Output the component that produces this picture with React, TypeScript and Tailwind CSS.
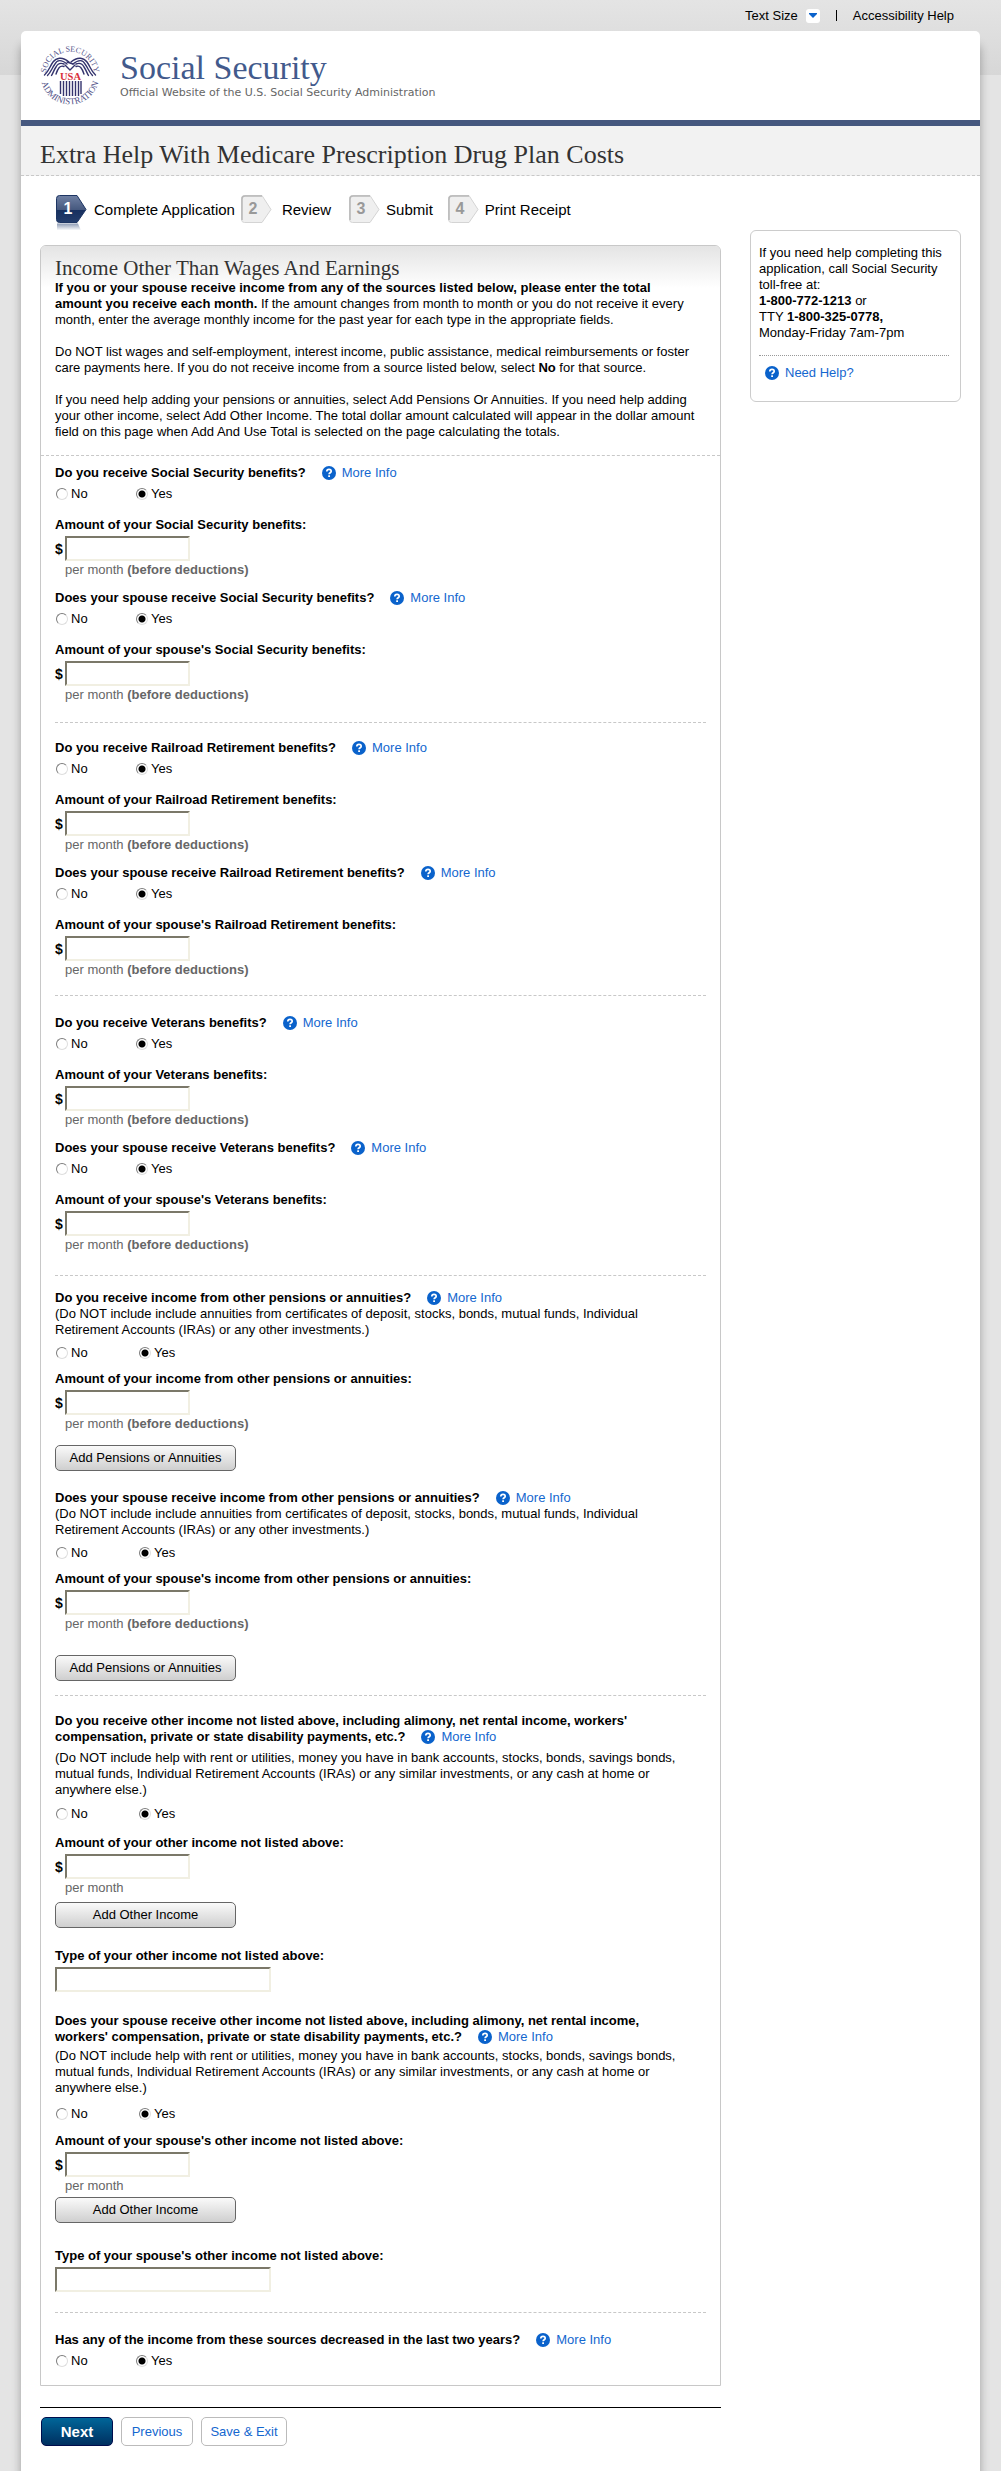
import { useId, type ReactNode } from "react";
import clsx from "clsx";

const STEPS = [
  { label: "Complete Application", spacing: "gap-[7px]" },
  { label: "Review", spacing: "ml-[6px] gap-[10px]" },
  { label: "Submit", spacing: "ml-[18px] gap-[6px]" },
  { label: "Print Receipt", spacing: "ml-[15px] gap-[6px]" },
];

function Seal() {
  return (
    <svg className="h-[60px] w-[60px] shrink-0 overflow-visible" viewBox="0 0 60 60" role="img" aria-label="Seal">
      <defs>
        <path id="seal-top" d="M5.6 31 A24.4 24.4 0 0 1 54.4 31" />
        <path id="seal-bottom" d="M0.6 30 A29.4 29.4 0 0 0 59.4 30" />
      </defs>
      <g fill="#54548a" fontFamily="Liberation Serif, serif" textAnchor="middle">
        <text fontSize="8">
          <textPath href="#seal-top" startOffset="50%">SOCIAL SECURITY</textPath>
        </text>
        <text fontSize="9">
          <textPath href="#seal-bottom" startOffset="50%">ADMINISTRATION</textPath>
        </text>
      </g>
      <g fill="none" stroke="#34346e" strokeWidth="1.4" strokeLinecap="round">
        <path d="M29 17 C22 11 16 13 13 17 C10 21 9 26 4.5 30" />
        <path d="M27 19 C21 14 17 15 15 19 C12 23 11 27 7.5 30.5" />
        <path d="M24 19 C19 17 17 20 16 22 C14 25 13 28 11.5 30.5" />
        <path d="M24 21.5 C20 20 18 23 16 29" />
        <path d="M31 17 C38 11 44 13 47 17 C50 21 51 26 55.5 30" />
        <path d="M33 19 C39 14 43 15 45 19 C48 23 49 27 52.5 30.5" />
        <path d="M36 19 C41 17 43 20 44 22 C46 25 47 28 48.5 30.5" />
        <path d="M36 21.5 C40 20 42 23 44 29" />
        <path d="M25 20 L30 25 L35 20 M27 17 L33 19" />
      </g>
      <text
        x="30.5"
        y="34.5"
        fill="#d8303a"
        fontFamily="Liberation Serif, serif"
        fontWeight="bold"
        fontSize="10.5"
        textAnchor="middle"
      >
        USA
      </text>
      <path
        d="M20.5 36v13M23.5 36v15M26.5 36v15M29.5 36v15M32.5 36v15M35.5 36v15M38.5 36v15M41 36v13"
        stroke="#34346e"
        strokeWidth="1.4"
      />
    </svg>
  );
}

function StepIcon({ number, active }: { number: number; active: boolean }) {
  return (
    <svg className="h-[36px] w-[31px] shrink-0" viewBox="0 0 31 36" aria-hidden="true">
      <defs>
        <linearGradient id="step-active" x1="0" y1="0" x2="0" y2="1">
          <stop offset="0" stopColor="#6f80a3" />
          <stop offset="0.52" stopColor="#46597f" />
          <stop offset="0.54" stopColor="#17305f" />
          <stop offset="1" stopColor="#243d6c" />
        </linearGradient>
        <linearGradient id="step-shadow" x1="0" y1="0" x2="0" y2="1">
          <stop offset="0" stopColor="#8d9bb5" />
          <stop offset="1" stopColor="#ffffff" />
        </linearGradient>
      </defs>
      {active && <path d="M1 28.5h21l3 7H1z" fill="url(#step-shadow)" />}
      <path
        d="M3.5 0.5H21L30 14.5L21 27.5H3.5Q0.5 27.5 0.5 24.5V3.5Q0.5 0.5 3.5 0.5Z"
        fill={active ? "url(#step-active)" : "#efefef"}
        stroke={active ? "#1d3563" : "#d4d4d4"}
      />
      {!active && <path d="M1 25V4Q1 1 4 1H21" fill="none" stroke="#b8b8b8" strokeWidth="1.5" />}
      <text
        x="12"
        y="18.5"
        fill={active ? "#ffffff" : "#999999"}
        fontFamily="Liberation Sans, Arial, sans-serif"
        fontWeight="bold"
        fontSize="16"
        textAnchor="middle"
      >
        {number}
      </text>
    </svg>
  );
}

function HelpLink({ children, className }: { children: ReactNode; className?: string }) {
  return (
    <a href="#help" className={clsx("inline-flex items-center gap-[6px] font-normal text-[#1467cf]", className)}>
      <svg className="h-[14px] w-[14px]" viewBox="0 0 14 14" aria-hidden="true">
        <circle cx="7" cy="7" r="7" fill="#0a62cb" />
        <path
          d="M4.8 5.4C4.8 2.7 9.2 2.7 9.2 5.2C9.2 6.7 7.1 6.7 7.1 8.3"
          fill="none"
          stroke="#fff"
          strokeWidth="1.7"
        />
        <rect x="6.2" y="9.3" width="1.8" height="1.7" fill="#fff" />
      </svg>
      {children}
    </a>
  );
}

interface YesNoProps {
  question: string;
  note?: string;
  className?: string;
  noteClassName?: string;
  choicesClassName?: string;
}

function YesNo({ question, note, className, noteClassName, choicesClassName = "mt-[5px]" }: YesNoProps) {
  const name = useId();
  const radio =
    "h-[12px] w-[12px] appearance-none rounded-full border border-t-[#7d7d7d] border-r-[#dedede] border-b-[#dedede] border-l-[#7d7d7d] bg-white checked:bg-[radial-gradient(circle,#000_3px,transparent_4px)]";

  return (
    <fieldset className={className}>
      <legend className="pr-4 font-bold">
        {question}
        <HelpLink className="ml-4 h-[16px] align-top">More Info</HelpLink>
      </legend>
      {note && <p className={noteClassName}>{note}</p>}
      <div className={clsx("flex", choicesClassName)}>
        <label className={clsx("flex items-center gap-[3px] pl-[1px]", note ? "w-[84px]" : "w-[81px]")}>
          <input type="radio" name={name} value="no" className={radio} />
          No
        </label>
        <label className="flex items-center gap-[3px]">
          <input type="radio" name={name} value="yes" defaultChecked className={radio} />
          Yes
        </label>
      </div>
    </fieldset>
  );
}

const INPUT =
  "h-[25px] border-2 border-t-[#7b7869] border-r-[#f1efe2] border-b-[#f1efe2] border-l-[#7b7869] bg-white px-1";

interface AmountProps {
  label: string;
  className?: string;
  beforeDeductions?: boolean;
}

function Amount({ label, className = "mt-[15px]", beforeDeductions = true }: AmountProps) {
  const id = useId();
  return (
    <div className={className}>
      <label htmlFor={id} className="block font-bold">
        {label}
      </label>
      <div className="mt-[3px] flex items-center">
        <span className="w-[10px] text-[14px] font-bold">$</span>
        <input id={id} type="text" className={clsx(INPUT, "w-[125px]")} />
      </div>
      <p className="mt-[1px] pl-[10px] text-[#666]">
        per month {beforeDeductions && <strong>(before deductions)</strong>}
      </p>
    </div>
  );
}

function IncomeType({ label, className }: { label: string; className?: string }) {
  const id = useId();
  return (
    <div className={className}>
      <label htmlFor={id} className="block font-bold">
        {label}
      </label>
      <input id={id} type="text" className={clsx(INPUT, "mt-[3px] block w-[216px]")} />
    </div>
  );
}

function AddButton({ children, className }: { children: ReactNode; className?: string }) {
  return (
    <button
      type="button"
      className={clsx(
        "block h-[26px] w-[181px] rounded-[5px] border border-[#666] bg-linear-to-b from-[#fafafa] to-[#cfcfcf] pb-[1px]",
        className
      )}
    >
      {children}
    </button>
  );
}

function Divider({ className }: { className?: string }) {
  return <hr className={clsx("border-t border-dashed border-[#c8c8c8]", className)} />;
}

const PENSION_NOTE =
  "(Do NOT include include annuities from certificates of deposit, stocks, bonds, mutual funds, Individual Retirement Accounts (IRAs) or any other investments.)";
const OTHER_NOTE =
  "(Do NOT include help with rent or utilities, money you have in bank accounts, stocks, bonds, savings bonds, mutual funds, Individual Retirement Accounts (IRAs) or any similar investments, or any cash at home or anywhere else.)";

const BENEFITS = [
  { name: "Social Security", top: "pt-[9px]", bottom: "mt-[19px]" },
  { name: "Railroad Retirement", top: "pt-[17px]", bottom: "mt-[17px]" },
  { name: "Veterans", top: "pt-[19px]", bottom: "mt-[22px]" },
];

function IncomeForm() {
  return (
    <div className="px-[14px] pb-[16px]">
      {BENEFITS.map(({ name, top, bottom }) => (
        <section key={name} className={top}>
          <YesNo question={`Do you receive ${name} benefits?`} />
          <Amount label={`Amount of your ${name} benefits:`} />
          <YesNo question={`Does your spouse receive ${name} benefits?`} className="mt-[12px]" />
          <Amount label={`Amount of your spouse's ${name} benefits:`} />
          <Divider className={bottom} />
        </section>
      ))}

      <section className="pt-[14px]">
        <YesNo
          question="Do you receive income from other pensions or annuities?"
          note={PENSION_NOTE}
          noteClassName="pr-[40px]"
          choicesClassName="mt-[7px]"
        />
        <Amount label="Amount of your income from other pensions or annuities:" className="mt-[10px]" />
        <AddButton className="mt-[13px]">Add Pensions or Annuities</AddButton>
        <YesNo
          question="Does your spouse receive income from other pensions or annuities?"
          note={PENSION_NOTE}
          className="mt-[19px]"
          noteClassName="pr-[40px]"
          choicesClassName="mt-[7px]"
        />
        <Amount label="Amount of your spouse's income from other pensions or annuities:" className="mt-[10px]" />
        <AddButton className="mt-[23px]">Add Pensions or Annuities</AddButton>
        <Divider className="mt-[14px]" />
      </section>

      <section className="pt-[17px]">
        <YesNo
          question="Do you receive other income not listed above, including alimony, net rental income, workers' compensation, private or state disability payments, etc.?"
          note={OTHER_NOTE}
          noteClassName="mt-[5px]"
          choicesClassName="mt-[8px]"
        />
        <Amount
          label="Amount of your other income not listed above:"
          className="mt-[13px]"
          beforeDeductions={false}
        />
        <AddButton className="mt-[6px]">Add Other Income</AddButton>
        <IncomeType label="Type of your other income not listed above:" className="mt-[20px]" />
        <YesNo
          question="Does your spouse receive other income not listed above, including alimony, net rental income, workers' compensation, private or state disability payments, etc.?"
          note={OTHER_NOTE}
          className="mt-[21px]"
          noteClassName="mt-[3px]"
          choicesClassName="mt-[10px]"
        />
        <Amount
          label="Amount of your spouse's other income not listed above:"
          className="mt-[11px]"
          beforeDeductions={false}
        />
        <AddButton className="mt-[3px]">Add Other Income</AddButton>
        <IncomeType label="Type of your spouse's other income not listed above:" className="mt-[25px]" />
        <Divider className="mt-[20px]" />
      </section>

      <section className="pt-[19px]">
        <YesNo question="Has any of the income from these sources decreased in the last two years?" />
      </section>
    </div>
  );
}

function HelpBox() {
  return (
    <aside className="mt-[54px] w-[211px] shrink-0 self-start rounded-[6px] border border-[#ccc] px-[8px] pt-[14px] pb-[17px]">
      <p>
        If you need help completing this application, call Social Security toll-free at:
        <br />
        <strong>1-800-772-1213</strong> or
        <br />
        TTY <strong>1-800-325-0778,</strong>
        <br />
        Monday-Friday 7am-7pm
      </p>
      <hr className="mt-[14px] mr-[3px] border-t border-dotted border-[#999]" />
      <HelpLink className="mt-[9px] ml-[6px]">Need Help?</HelpLink>
    </aside>
  );
}

export default function App() {
  const secondary = "h-[29px] rounded-[5px] border border-[#bbb] bg-white text-[#1467cf]";

  return (
    <div className="bg-white pb-[7px] font-['Liberation_Sans',Arial,sans-serif] text-[13px] leading-[16px] text-black">
      <div className="mr-[7px] overflow-hidden bg-[#e4e4e4] bg-[linear-gradient(#e4e4e4,#d7d7d7)] bg-[length:100%_75px] bg-no-repeat px-[21px]">
        <nav className="flex h-[31px] items-center justify-end pr-[26px]">
          <button type="button" className="flex items-center gap-2">
            Text Size
            <span className="flex h-[14px] w-[14px] items-center justify-center rounded-[3px] bg-white">
              <svg className="h-[5px] w-[8px]" viewBox="0 0 8 5" aria-hidden="true">
                <path d="M0 0h8v1L4 5L0 1z" fill="#0a62cb" />
              </svg>
            </span>
          </button>
          <span className="mx-4 h-[11px] w-px bg-black" />
          <a href="#accessibility">Accessibility Help</a>
        </nav>

        <div className="rounded-t-[5px] bg-white pb-[25px] shadow-[0_14px_10px_rgba(0,0,0,0.3)]">
          <header className="flex h-[89px] items-start gap-[20px] px-[19px] pt-[14px]">
            <Seal />
            <div className="pt-[5px]">
              <div className="font-['Liberation_Serif',serif] text-[34px] leading-[36px] text-[#425a8c]">
                Social Security
              </div>
              <div className="font-['DejaVu_Sans',sans-serif] text-[11px] leading-[14px] text-[#666]">
                Official Website of the U.S. Social Security Administration
              </div>
            </div>
          </header>
          <div className="border-t-[6px] border-b border-dashed border-t-[#46587f] border-b-[#c8c8c8] bg-[#f2f2f2] px-[19px] [border-top-style:solid]">
            <h1 className="pt-[13px] pb-[4px] font-['Liberation_Serif',serif] text-[26px] leading-[32px] text-[#333]">
              Extra Help With Medicare Prescription Drug Plan Costs
            </h1>
          </div>

          <div className="flex gap-[29px] px-[19px]">
            <main className="min-w-0 flex-1">
              <ol className="flex h-[69px] pt-[19px] pl-[16px] text-[15px] leading-[30px]">
                {STEPS.map((step, i) => (
                  <li key={step.label} className={clsx("flex whitespace-nowrap", step.spacing)}>
                    <StepIcon number={i + 1} active={i === 0} />
                    {step.label}
                  </li>
                ))}
              </ol>

              <form>
                <div className="rounded-t-[6px] border border-[#c8c8c8]">
                  <div className="rounded-t-[5px] border-b border-dashed border-[#c8c8c8] bg-[linear-gradient(#e4e4e4,#fff)] bg-[length:100%_42px] bg-no-repeat px-[14px] pt-[10px] pb-[15px]">
                    <h2 className="font-['Liberation_Serif',serif] text-[21px] leading-[24px] text-[#333]">
                      Income Other Than Wages And Earnings
                    </h2>
                    <p className="pr-4">
                      <strong>
                        If you or your spouse receive income from any of the sources listed below, please enter the
                        total amount you receive each month.
                      </strong>{" "}
                      If the amount changes from month to month or you do not receive it every month, enter the average
                      monthly income for the past year for each type in the appropriate fields.
                    </p>
                    <p className="mt-4">
                      Do NOT list wages and self-employment, interest income, public assistance, medical
                      reimbursements or foster care payments here. If you do not receive income from a source listed
                      below, select <strong>No</strong> for that source.
                    </p>
                    <p className="mt-4">
                      If you need help adding your pensions or annuities, select Add Pensions Or Annuities. If you need
                      help adding your other income, select Add Other Income. The total dollar amount calculated will
                      appear in the dollar amount field on this page when Add And Use Total is selected on the page
                      calculating the totals.
                    </p>
                  </div>
                  <IncomeForm />
                </div>

                <div className="mt-[21px] flex gap-[8px] border-t border-black pt-[9px] pl-[1px]">
                  <button
                    type="submit"
                    className="h-[29px] w-[72px] rounded-[5px] border border-[#000d4d] bg-linear-to-b from-[#006699] to-[#003060] text-[15px] font-bold text-white"
                  >
                    Next
                  </button>
                  <button type="button" className={clsx(secondary, "w-[72px]")}>
                    Previous
                  </button>
                  <button type="button" className={clsx(secondary, "w-[86px]")}>
                    Save &amp; Exit
                  </button>
                </div>
              </form>
            </main>
            <HelpBox />
          </div>
        </div>
      </div>
    </div>
  );
}
